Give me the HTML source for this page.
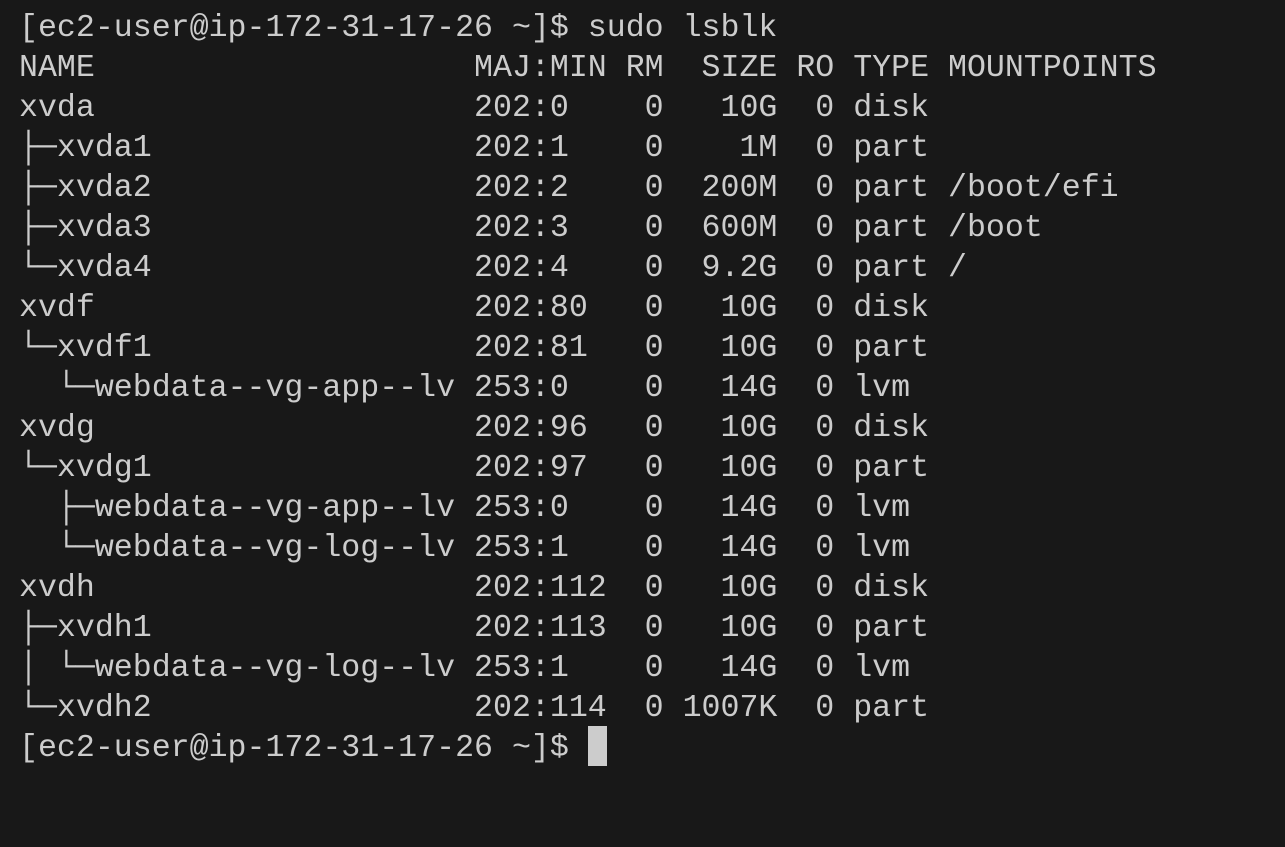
<!DOCTYPE html>
<html><head><meta charset="utf-8"><style>
html,body{margin:0;padding:0;background:#181818;width:1285px;height:847px;overflow:hidden}
pre{position:absolute;left:19px;top:9px;margin:0;font-family:"Liberation Mono","DejaVu Sans Mono",monospace;font-size:31.6px;line-height:40px;color:#cccccc}
.cur{position:absolute;left:588px;top:726px;width:19px;height:40px;background:#cccccc}
</style></head><body>
<pre>[ec2-user@ip-172-31-17-26 ~]$ sudo lsblk
NAME                    MAJ:MIN RM  SIZE RO TYPE MOUNTPOINTS
xvda                    202:0    0   10G  0 disk
├─xvda1                 202:1    0    1M  0 part
├─xvda2                 202:2    0  200M  0 part /boot/efi
├─xvda3                 202:3    0  600M  0 part /boot
└─xvda4                 202:4    0  9.2G  0 part /
xvdf                    202:80   0   10G  0 disk
└─xvdf1                 202:81   0   10G  0 part
  └─webdata--vg-app--lv 253:0    0   14G  0 lvm
xvdg                    202:96   0   10G  0 disk
└─xvdg1                 202:97   0   10G  0 part
  ├─webdata--vg-app--lv 253:0    0   14G  0 lvm
  └─webdata--vg-log--lv 253:1    0   14G  0 lvm
xvdh                    202:112  0   10G  0 disk
├─xvdh1                 202:113  0   10G  0 part
│ └─webdata--vg-log--lv 253:1    0   14G  0 lvm
└─xvdh2                 202:114  0 1007K  0 part
[ec2-user@ip-172-31-17-26 ~]$ </pre>
<div class="cur"></div>
</body></html>
